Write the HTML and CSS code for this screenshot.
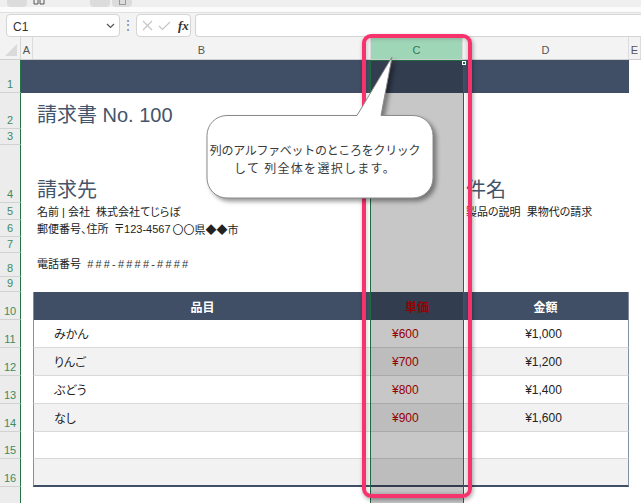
FILE: index.html
```html
<!DOCTYPE html>
<html lang="ja">
<head>
<meta charset="utf-8">
<title>請求書</title>
<link rel="stylesheet" href="styles.css">
</head>
<body>
<div class="app">
  <div class="tabstrip">
    <span class="tbtn b1"></span>
    <svg class="tglyph" width="12" height="6" viewBox="0 0 12 6"><path d="M1 0V4H5V0M7 0V4H11V0" fill="none" stroke="#555" stroke-width="1"/></svg>
    <span class="tbtn b2"></span>
    <span class="tbtn b3"><span class="sq"></span></span>
  </div>
  <div class="tabgap"></div>
  <div class="fbar">
    <div class="namebox">
      <span class="nb-text">C1</span>
      <svg class="chev" width="9" height="6" viewBox="0 0 9 6"><path d="M1 1L4.5 4.5L8 1" fill="none" stroke="#555" stroke-width="1.2"/></svg>
    </div>
    <span class="dots">⋮</span>
    <div class="fxbox">
      <svg width="11" height="11" viewBox="0 0 11 11"><path d="M1 1L10 10M10 1L1 10" stroke="#c4c4c4" stroke-width="1.1"/></svg>
      <svg width="13" height="10" viewBox="0 0 13 10"><path d="M1 5L4.5 8.5L12 1" fill="none" stroke="#c4c4c4" stroke-width="1.1"/></svg>
      <span class="fx">fx</span>
    </div>
    <div class="finput"></div>
  </div>

  <div class="sheet">
    <div class="row r-head">
      <div class="corner"><span class="tri"></span></div>
      <div class="ch">A</div>
      <div class="ch">B</div>
      <div class="ch sel">C</div>
      <div class="ch">D</div>
      <div class="ch">E</div>
    </div>

    <div class="row h33">
      <div class="rh">1</div>
      <div class="banner"></div>
      <div class="cell"></div>
    </div>

    <div class="row h36">
      <div class="rh">2</div>
      <div class="cell"></div>
      <div class="cell b title">請求書 No. 100</div>
      <div class="cell"></div><div class="cell"></div><div class="cell"></div>
    </div>

    <div class="row h16">
      <div class="rh">3</div>
      <div class="cell"></div><div class="cell"></div><div class="cell"></div><div class="cell"></div><div class="cell"></div>
    </div>

    <div class="row h58">
      <div class="rh">4</div>
      <div class="cell"></div>
      <div class="cell b heading">請求先</div>
      <div class="cell"></div>
      <div class="cell d heading">件名</div>
      <div class="cell"></div>
    </div>

    <div class="row h17">
      <div class="rh">5</div>
      <div class="cell"></div>
      <div class="cell b info">名前 | 会社&nbsp;&nbsp;株式会社てじらぼ</div>
      <div class="cell"></div>
      <div class="cell d info">製品の説明&nbsp;&nbsp;果物代の請求</div>
      <div class="cell"></div>
    </div>

    <div class="row h17">
      <div class="rh">6</div>
      <div class="cell"></div>
      <div class="cell b info">郵便番号、住所&nbsp;&nbsp;〒123-4567 <span class="cjk">〇〇県◆◆市</span></div>
      <div class="cell"></div><div class="cell"></div><div class="cell"></div>
    </div>

    <div class="row h16">
      <div class="rh">7</div>
      <div class="cell"></div><div class="cell"></div><div class="cell"></div><div class="cell"></div><div class="cell"></div>
    </div>

    <div class="row h24">
      <div class="rh">8</div>
      <div class="cell"></div>
      <div class="cell b info tel">電話番号&nbsp;&nbsp;<span class="hash">###-####-####</span></div>
      <div class="cell"></div><div class="cell"></div><div class="cell"></div>
    </div>

    <div class="row h15">
      <div class="rh">9</div>
      <div class="cell"></div><div class="cell"></div><div class="cell"></div><div class="cell"></div><div class="cell"></div>
    </div>

    <div class="row h28">
      <div class="rh">10</div>
      <div class="cell"></div>
      <div class="th tb">品目</div>
      <div class="th tc red">単価</div>
      <div class="th td">金額</div>
      <div class="cell"></div>
    </div>

    <div class="row h28">
      <div class="rh">11</div>
      <div class="cell"></div>
      <div class="tcell tb item">みかん</div>
      <div class="tcell tc price">¥600</div>
      <div class="tcell td amount">¥1,000</div>
      <div class="cell"></div>
    </div>

    <div class="row h28 alt">
      <div class="rh">12</div>
      <div class="cell"></div>
      <div class="tcell tb item">りんご</div>
      <div class="tcell tc price">¥700</div>
      <div class="tcell td amount">¥1,200</div>
      <div class="cell"></div>
    </div>

    <div class="row h28">
      <div class="rh">13</div>
      <div class="cell"></div>
      <div class="tcell tb item">ぶどう</div>
      <div class="tcell tc price">¥800</div>
      <div class="tcell td amount">¥1,400</div>
      <div class="cell"></div>
    </div>

    <div class="row h28 alt">
      <div class="rh">14</div>
      <div class="cell"></div>
      <div class="tcell tb item">なし</div>
      <div class="tcell tc price">¥900</div>
      <div class="tcell td amount">¥1,600</div>
      <div class="cell"></div>
    </div>

    <div class="row h27">
      <div class="rh">15</div>
      <div class="cell"></div>
      <div class="tcell tb"></div>
      <div class="tcell tc"></div>
      <div class="tcell td"></div>
      <div class="cell"></div>
    </div>

    <div class="row h28 alt last">
      <div class="rh">16</div>
      <div class="cell"></div>
      <div class="tcell tb"></div>
      <div class="tcell tc"></div>
      <div class="tcell td"></div>
      <div class="cell"></div>
    </div>

    <div class="row h28">
      <div class="rh"></div>
      <div class="cell"></div><div class="cell"></div><div class="cell"></div><div class="cell"></div><div class="cell"></div>
    </div>

    <div class="selection"><span class="handle"></span></div>
  </div>

  <div class="highlight"></div>

  <svg class="callout-shape" width="641" height="503" viewBox="0 0 641 503">
    <path d="M227 115.5H357L392 57L381 115.5H413A20 20 0 0 1 433 135.5V178A20 20 0 0 1 413 198H227A20 20 0 0 1 207 178V135.5A20 20 0 0 1 227 115.5Z" fill="#fff" stroke="#8a8a8a" stroke-width="1"/>
  </svg>
  <div class="callout-text">
    <span class="l1">列のアルファベットのところをクリック</span>
    <span class="l2">して 列全体を選択します。</span>
  </div>
</div>
</body>
</html>
```

FILE: styles.css
```css
* { box-sizing: border-box; margin: 0; padding: 0; }
html, body { width: 641px; height: 503px; overflow: hidden; }
body {
  font-family: "Liberation Sans", "Noto Sans CJK JP", sans-serif;
  background: #f3f3f3;
  color: #222;
}
.app { position: relative; width: 641px; height: 503px; overflow: hidden; }

/* top strip */
.tabstrip {
  height: 7px;
  display: flex;
  align-items: flex-start;
  background: #efefef;
}
.tbtn {
  display: block;
  height: 7px;
  width: 20px;
  background: #dcdcdc;
  border-radius: 0 0 4px 4px;
}
.b1 { margin-left: 7px; }
.tglyph { margin-left: 6px; margin-top: 0; }
.b2 { margin-left: 45px; }
.b3 { margin-left: 2px; display: flex; justify-content: center; }
.sq { width: 7px; height: 5px; border: 1px solid #999; border-top: none; }
.tabgap {
  height: 6px;
  background: #fbfbfb;
  border-bottom: 1px solid #e0e0e0;
}

/* formula bar */
.fbar {
  height: 24px;
  display: flex;
  align-items: flex-start;
  padding: 1px 0 0 6px;
  background: #f3f3f3;
}
.namebox {
  width: 114px;
  height: 23px;
  background: #fff;
  border: 1px solid #d4d4d4;
  border-radius: 4px;
  display: flex;
  align-items: center;
  justify-content: space-between;
  padding: 0 4px 0 6px;
}
.nb-text { font-size: 12px; color: #333; padding-top: 2px; }
.chev { margin-top: 1px; }
.dots {
  width: 16px;
  text-align: center;
  font-size: 12px;
  color: #777;
  line-height: 23px;
}
.fxbox {
  width: 55px;
  height: 23px;
  background: #fff;
  border: 1px solid #d4d4d4;
  border-radius: 4px;
  display: flex;
  align-items: center;
  gap: 5px;
  padding-left: 5px;
}
.fx {
  font-family: "Liberation Serif", serif;
  font-style: italic;
  font-weight: bold;
  font-size: 13px;
  color: #333;
  margin-left: 2px;
}
.finput {
  margin-left: 4px;
  flex: 1;
  height: 23px;
  background: #fff;
  border: 1px solid #d4d4d4;
  border-right: none;
  border-radius: 4px 0 0 4px;
}

/* sheet */
.sheet {
  position: relative;
  background: #fff;
  display: flex;
  flex-direction: column;
}
.row {
  display: grid;
  grid-template-columns: 21px 12px 338px 92px 166px 12px;
  flex: none;
}
.h33 { height: 33px; }
.h36 { height: 36px; }
.h16 { height: 16px; }
.h58 { height: 58px; }
.h17 { height: 17px; }
.h24 { height: 24px; }
.h15 { height: 15px; }
.h28 { height: 28px; }
.h27 { height: 27px; }

.r-head {
  height: 23px;
  background: #f3f3f3;
  border-bottom: 1px solid #cfcfcf;
}
.corner {
  position: relative;
  border-right: 1px solid #d6d6d6;
}
.tri {
  position: absolute;
  right: 3px;
  bottom: 3px;
  width: 0;
  height: 0;
  border-left: 12px solid transparent;
  border-bottom: 12px solid #dadada;
}
.ch {
  font-size: 11px;
  line-height: 13px;
  color: #555;
  display: flex;
  align-items: flex-end;
  justify-content: center;
  padding-bottom: 2px;
  border-right: 1px solid #dcdcdc;
}
.ch.sel {
  background: #a0d6b8;
  color: #2f7a50;
}

.rh {
  background: #ececec;
  border-right: 1px solid #217346;
  border-bottom: 1px solid #d2d2d2;
  color: #3f8a5f;
  font-size: 11px;
  line-height: 13px;
  display: flex;
  align-items: flex-end;
  justify-content: center;
  padding-bottom: 1px;
}
.cell {
  display: flex;
  align-items: flex-end;
  white-space: nowrap;
  min-width: 0;
}
.banner {
  grid-column: 2 / 6;
  background: #414f66;
}
.b { padding-left: 4px; }
.d { padding-left: 3px; }
.title {
  font-size: 20px;
  line-height: 26px;
  color: #44546a;
  padding-bottom: 1px;
}
.heading {
  font-size: 20px;
  line-height: 26px;
  color: #44546a;
  padding-bottom: 0px;
}
.info {
  font-family: "Liberation Sans", "Noto Sans CJK JP", sans-serif;
  font-feature-settings: "palt";
  font-size: 11px;
  line-height: 15px;
  color: #222;
  padding-bottom: 0;
}
.cjk {
  font-family: "Noto Sans CJK JP", sans-serif;
  font-feature-settings: normal;
  margin-left: 2px;
}
.hash { letter-spacing: 2.2px; color: #333; }
.tel { padding-bottom: 5px; }

/* table */
.th {
  background: #414f66;
  color: #fff;
  font-weight: bold;
  font-size: 12px;
  display: flex;
  align-items: center;
  justify-content: center;
  font-feature-settings: "palt";
}
.th.tb { border-left: 1px solid #7f8ca0; }
.th.td { border-right: 1px solid #7f8ca0; }
.th.red { color: #c00000; }
.tcell {
  display: flex;
  align-items: center;
  font-size: 12px;
  color: #222;
  border-bottom: 1px solid #d9d9d9;
  font-feature-settings: "palt";
  white-space: nowrap;
}
.tcell.tb { border-left: 1px solid #8391a6; }
.tcell.td { border-right: 1px solid #8391a6; }
.alt .tcell { background: #f2f2f2; }
.last .tcell { border-bottom: 2px solid #414f66; }
.item { padding-left: 20px; }
.price { padding-left: 21px; color: #c00000; }
.amount { justify-content: center; padding-right: 4px; }

/* overlays */
.selection {
  position: absolute;
  left: 370px;
  top: 23px;
  width: 94px;
  bottom: 0;
  background: rgba(0, 0, 0, 0.22);
  border: 1px solid #1e6b41;
  border-bottom: none;
}
.handle {
  position: absolute;
  right: -3px;
  top: 0;
  width: 4px;
  height: 4px;
  background: #1e6b41;
  border: 1px solid #fff;
}
.highlight {
  position: absolute;
  left: 362px;
  top: 34px;
  width: 110px;
  height: 464px;
  border: 4px solid #f7336d;
  border-radius: 9px;
  box-shadow: 1px 2px 4px rgba(0, 0, 0, 0.35), inset 0 0 4px 1px rgba(0, 0, 0, 0.18);
}
.callout-shape {
  position: absolute;
  left: 0;
  top: 0;
  filter: drop-shadow(3px 3px 2px rgba(0, 0, 0, 0.4));
}
.callout-text {
  position: absolute;
  left: 207px;
  top: 118px;
  width: 226px;
  height: 82px;
  display: flex;
  flex-direction: column;
  align-items: center;
  justify-content: center;
  padding-right: 10px;
  font-family: "Noto Sans CJK JP", sans-serif;
  font-size: 12px;
  line-height: 18px;
  color: #3a3a3a;
  white-space: nowrap;
}
.l1 { letter-spacing: -0.3px; }
.l2 { letter-spacing: 1.3px; }
```
